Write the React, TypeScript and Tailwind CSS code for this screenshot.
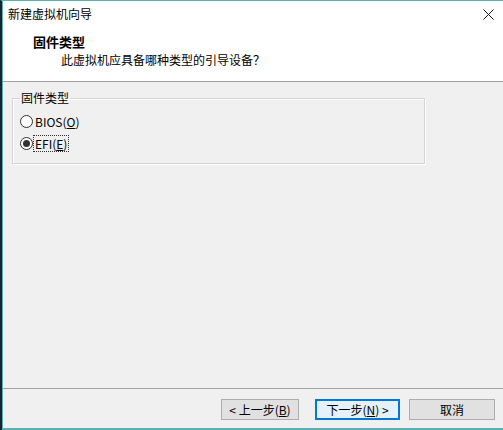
import { useState } from "react";

const font = { fontFamily: '"Microsoft YaHei", "Noto Sans CJK SC", "Liberation Sans", sans-serif' };

const Radio = ({ checked, label, hot, focused, onSelect }: { checked: boolean; label: string; hot: string; focused?: boolean; onSelect: () => void }) => {
  const [before, after] = label.split("(");
  return (
    <div className="flex items-center h-[22px] cursor-default" onClick={onSelect}>
      <span className="w-[13px] h-[13px] rounded-full border border-[#333] bg-white flex items-center justify-center">
        {checked && <span className="w-[7px] h-[7px] rounded-full bg-[#333]" />}
      </span>
      <span className={`ml-[1px] px-[1px] text-[12px] leading-[15px] ${focused ? "outline outline-1 outline-dotted outline-[#333]" : ""}`}>
        {before}(<span className="underline">{hot}</span>{after.slice(1)}
      </span>
    </div>
  );
};

export default function App() {
  const [firmware, setFirmware] = useState("efi");
  return (
    <div className="w-[503px] h-[430px] flex flex-col border-t border-[#5cb0b5] border-l-2 border-l-[#17262b] bg-[#f0f0f0] text-black" style={font}>
      <div className="flex-1 flex flex-col border-l border-[#5cb0b5] border-b-2 border-b-[#5cb0b5]">
        {/* title bar */}
        <div className="h-[25px] bg-white flex items-center justify-between pl-[5px] pr-[9px]">
          <span className="text-[12px]">新建虚拟机向导</span>
          <svg width="11" height="11" viewBox="0 0 11 11" className="mt-[1px]">
            <path d="M0.5 0.5 L10.5 10.5 M10.5 0.5 L0.5 10.5" stroke="#111" strokeWidth="1" />
          </svg>
        </div>
        {/* header */}
        <div className="h-[56px] bg-white border-b border-[#a0a0a0] pl-[30px] pt-[7px]">
          <div className="text-[13px] font-bold leading-[18px]">固件类型</div>
          <div className="text-[12px] leading-[18px] pl-[28px]">此虚拟机应具备哪种类型的引导设备？</div>
        </div>
        {/* body */}
        <div className="flex-1 pl-[9px] pt-[8px]">
          <fieldset className="w-[413px] h-[74px] border border-[#d5d5d5] shadow-[inset_1px_1px_0_#fff,1px_1px_0_#fff] px-[7px]">
            <legend className="text-[12px] px-[1px] leading-[16px]">固件类型</legend>
            <div className="pt-[4px]">
              <Radio checked={firmware === "bios"} label="BIOS(O)" hot="O" onSelect={() => setFirmware("bios")} />
              <Radio checked={firmware === "efi"} label="EFI(E)" hot="E" focused onSelect={() => setFirmware("efi")} />
            </div>
          </fieldset>
        </div>
        {/* footer */}
        <div className="border-t border-[#a0a0a0] h-[40px] flex items-start justify-end pt-[10px] pr-[8px]">
          <button className="w-[78px] h-[21px] bg-[#e1e1e1] border border-[#adadad] text-[12px] leading-none">
            &lt; 上一步(<span className="underline">B</span>)
          </button>
          <button className="ml-[16px] w-[85px] h-[21px] bg-[#e5f1fb] border-2 border-[#0078d7] text-[12px] leading-none">
            下一步(<span className="underline">N</span>) &gt;
          </button>
          <button className="ml-[9px] w-[86px] h-[21px] bg-[#e1e1e1] border border-[#adadad] text-[12px] leading-none">取消</button>
        </div>
      </div>
    </div>
  );
}
